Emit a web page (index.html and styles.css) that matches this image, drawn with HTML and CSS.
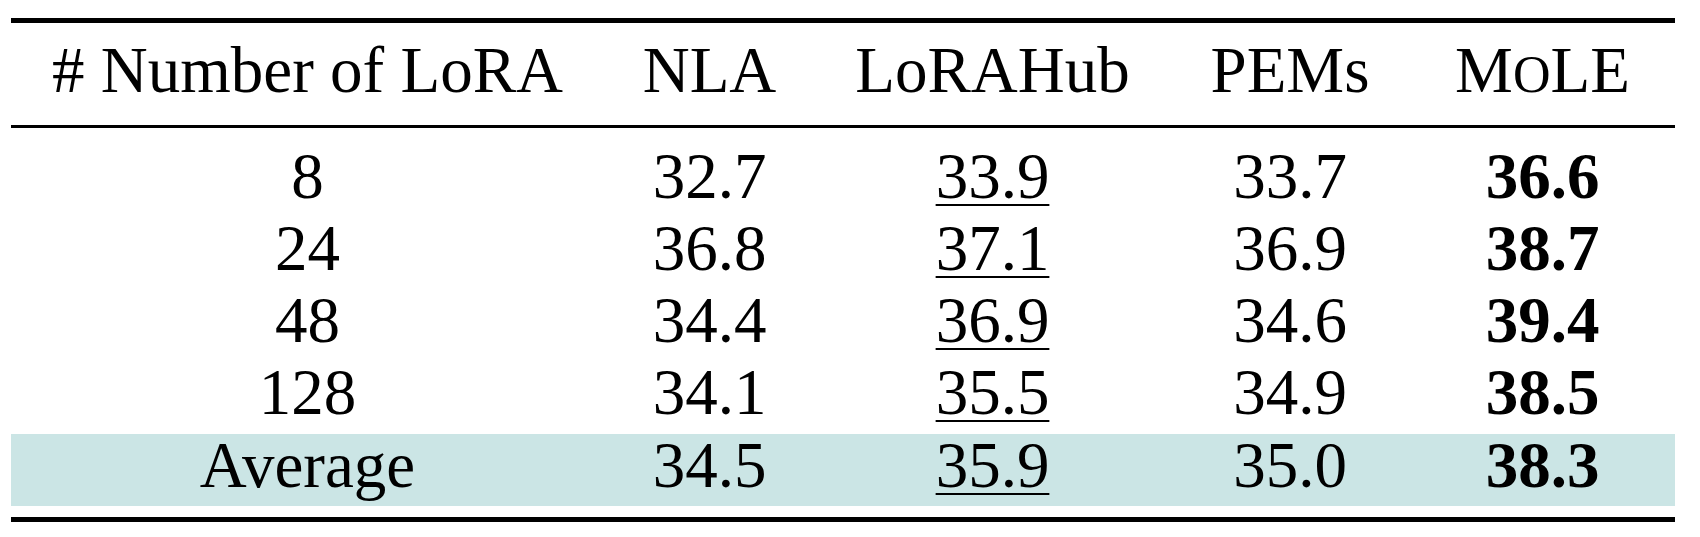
FILE: index.html
```html
<!DOCTYPE html>
<html lang="en">
<head>
    <meta charset="UTF-8">
    <meta name="viewport" content="width=device-width, initial-scale=1.0">
    <title>Number of LoRA comparison</title>

    <link rel="stylesheet" href="styles.css">
</head>
<body>
    <div class="results">
        <table class="results-table">
            <colgroup>
                <col class="col-count">
                <col class="col-nla">
                <col class="col-hub">
                <col class="col-pems">
                <col class="col-mole">
            </colgroup>
            <thead>
                <tr>
                    <th># Number of LoRA</th>
                    <th>NLA</th>
                    <th>LoRAHub</th>
                    <th>PEMs</th>
                    <th>M<span class="small-cap">o</span>LE</th>
                </tr>
            </thead>
            <tbody>
                <tr class="first">
                    <td>8</td>
                    <td>32.7</td>
                    <td><span class="second">33.9</span></td>
                    <td>33.7</td>
                    <td class="best">36.6</td>
                </tr>
                <tr>
                    <td>24</td>
                    <td>36.8</td>
                    <td><span class="second">37.1</span></td>
                    <td>36.9</td>
                    <td class="best">38.7</td>
                </tr>
                <tr>
                    <td>48</td>
                    <td>34.4</td>
                    <td><span class="second">36.9</span></td>
                    <td>34.6</td>
                    <td class="best">39.4</td>
                </tr>
                <tr class="last">
                    <td>128</td>
                    <td>34.1</td>
                    <td><span class="second">35.5</span></td>
                    <td>34.9</td>
                    <td class="best">38.5</td>
                </tr>
                <tr class="average">
                    <td>Average</td>
                    <td>34.5</td>
                    <td><span class="second">35.9</span></td>
                    <td>35.0</td>
                    <td class="best">38.3</td>
                </tr>
            </tbody>
        </table>
    </div>
</body>
</html>
```

FILE: styles.css
```css
body {
    margin: 0;
    padding: 0;
    background-color: #fff;
    color: #000;
    font-family: 'Liberation Serif', 'Times New Roman', serif;
}

.results {
    width: 1664px;
    margin: 18px 0 0 11px;
    border-top: 5px solid #000;
    border-bottom: 5px solid #000;
    padding-bottom: 11px;
}

.results-table {
    width: 100%;
    table-layout: fixed;
    border-collapse: collapse;
    font-size: 65px;
    line-height: 72px;
}

.col-count { width: 593px; }
.col-nla { width: 211px; }
.col-hub { width: 355px; }
.col-pems { width: 240px; }
.col-mole { width: 265px; }

.results-table th,
.results-table td {
    padding: 0;
    text-align: center;
    white-space: nowrap;
}

.results-table th {
    font-weight: normal;
    padding-top: 11px;
    padding-bottom: 19px;
    border-bottom: 3px solid #000;
}

.small-cap {
    text-transform: uppercase;
    font-size: 0.8em;
    line-height: 1;
}

.results-table tr.first td {
    padding-top: 12px;
}

.results-table tr.last td {
    padding-bottom: 6px;
}

.results-table tr.average td {
    background-color: #cbe5e5;
    line-height: 62px;
    padding-bottom: 10px;
}

.second {
    text-decoration: underline;
    text-decoration-thickness: 2px;
    text-underline-offset: 6px;
}

.best {
    font-weight: bold;
}
```
